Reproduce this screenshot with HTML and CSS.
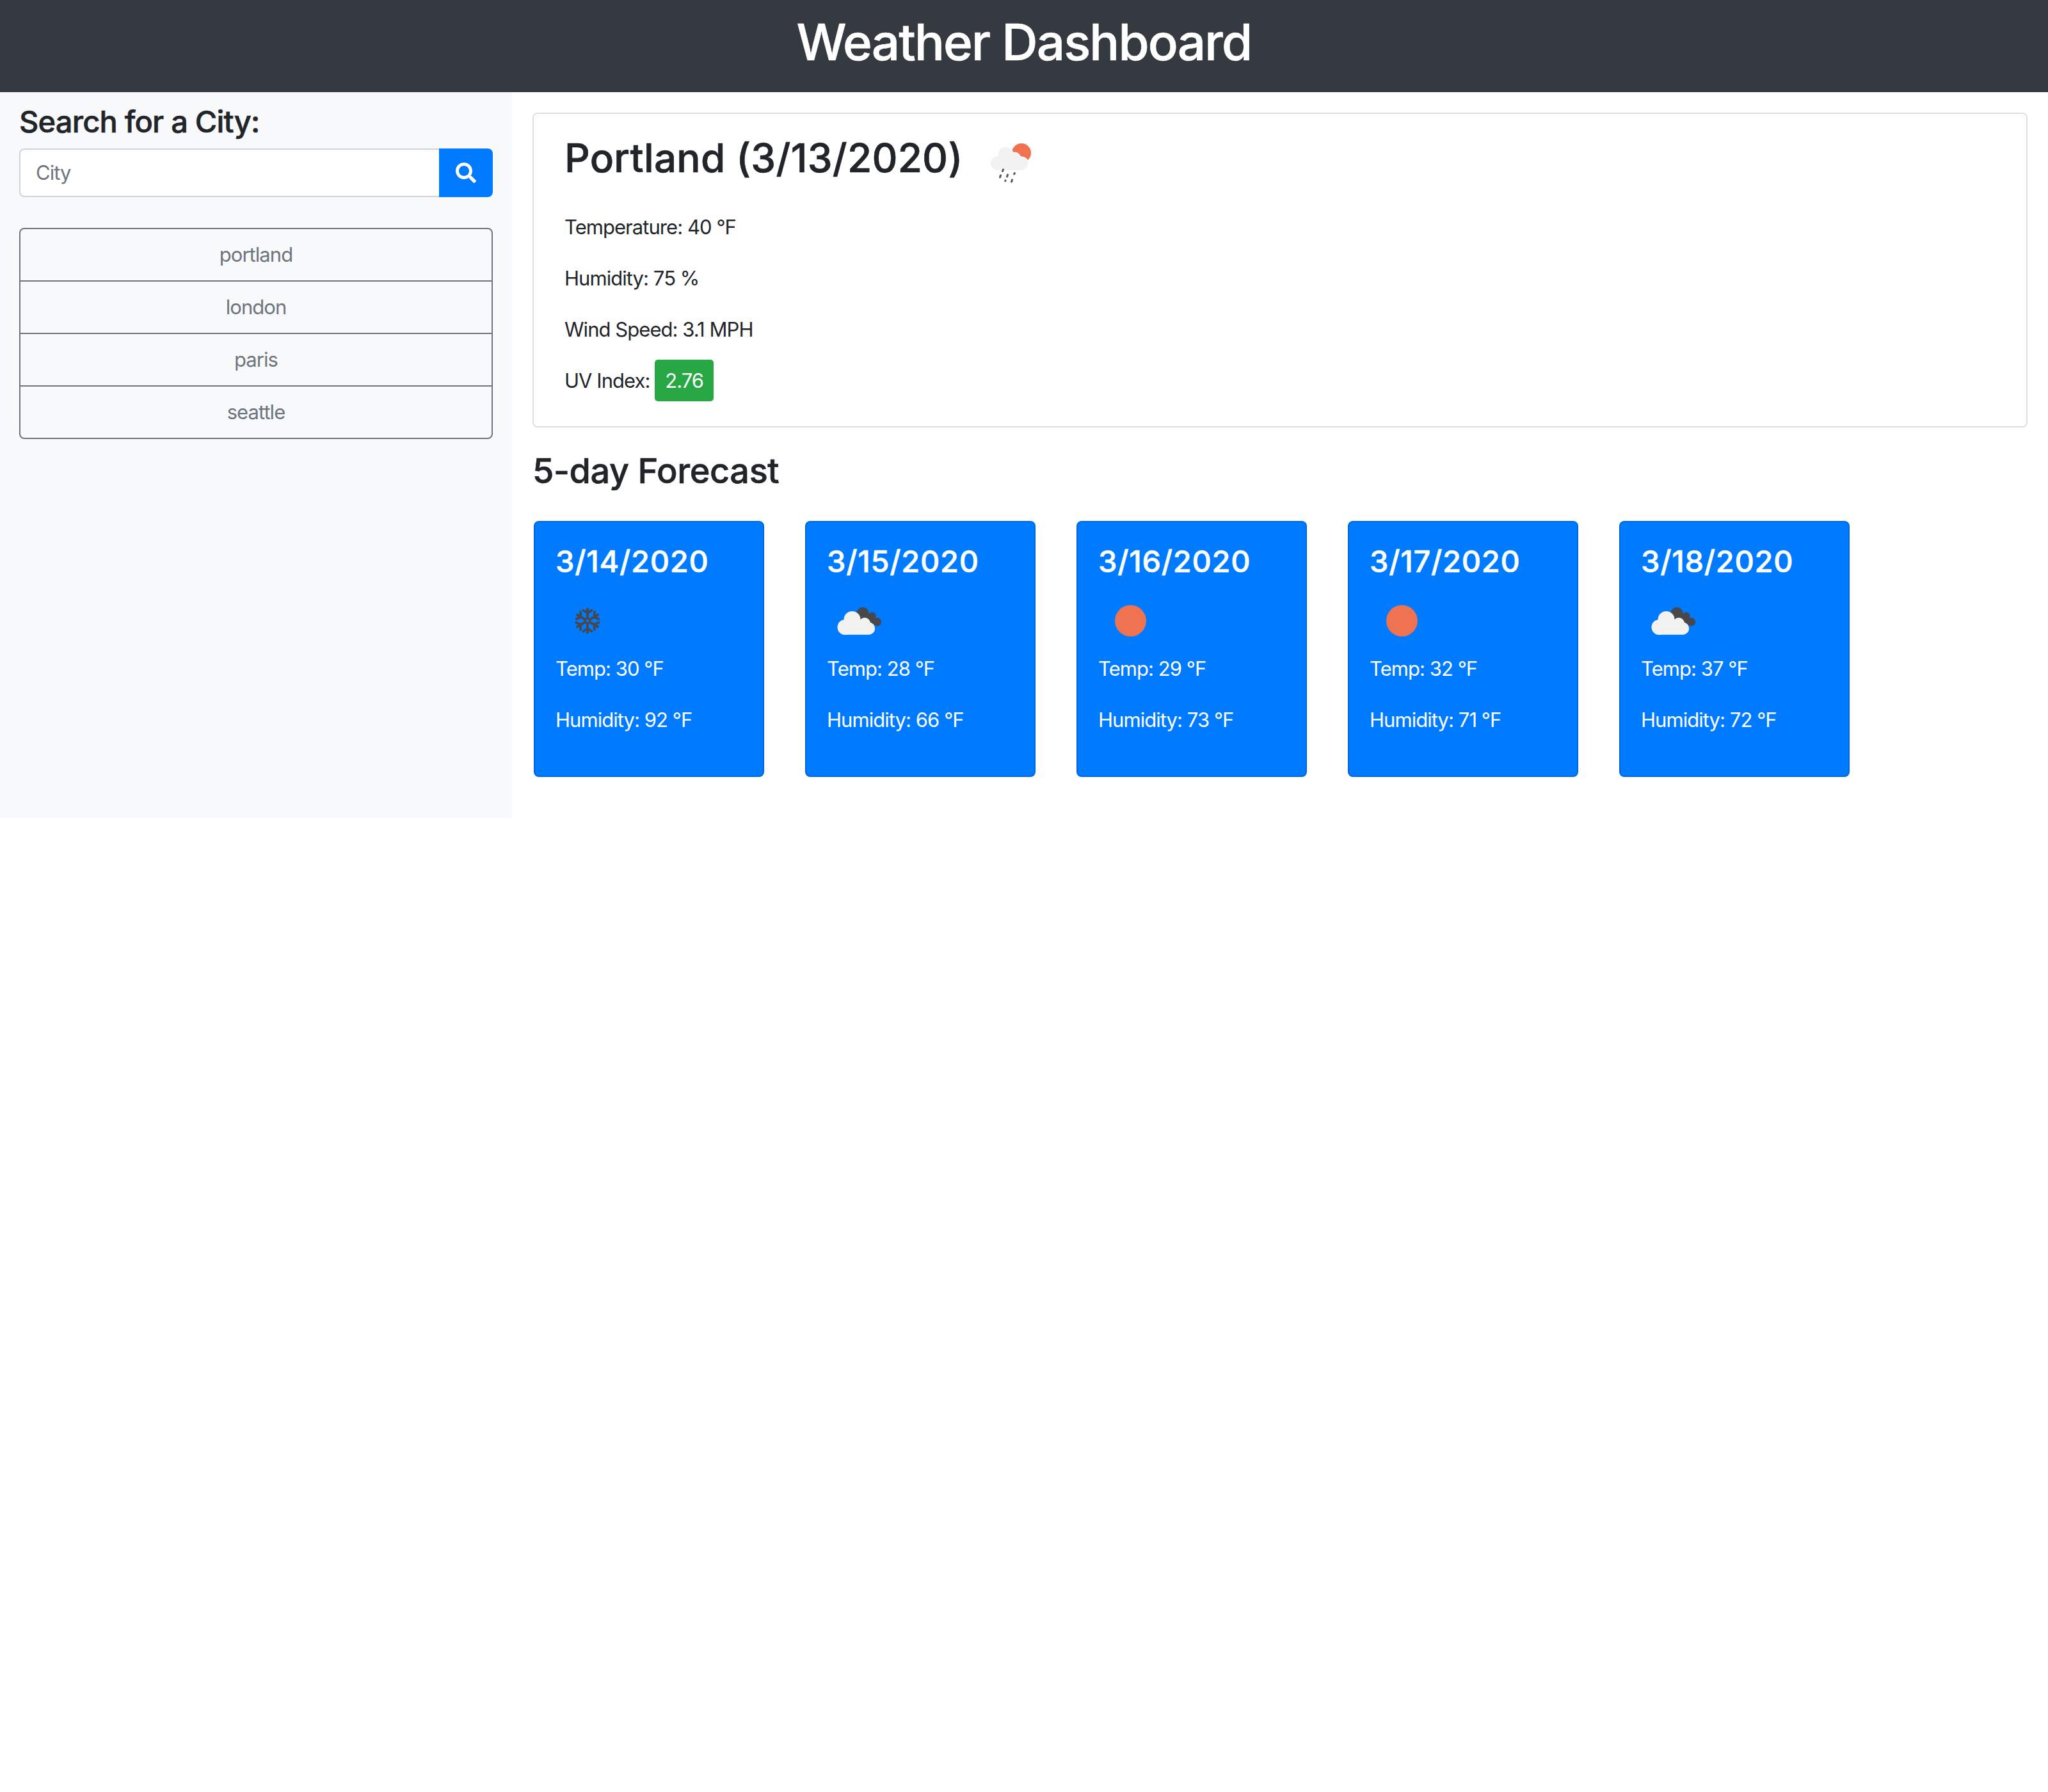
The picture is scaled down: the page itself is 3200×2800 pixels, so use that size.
FILE: index.html
```html
<!DOCTYPE html>
<html lang="en">
<head>
    <meta charset="UTF-8">
    <title>Weather Dashboard</title>
    <link rel="stylesheet" href="styles.css">
</head>
<body>
    <svg class="icon-defs" width="0" height="0">
        <symbol id="icon-clear" viewBox="0 0 100 100">
            <circle cx="51.5" cy="50" r="24.5" fill="#ef7350"/>
        </symbol>
        <symbol id="icon-snow" viewBox="0 0 100 100">
            <g fill="none" stroke="#48484c" stroke-width="3.8" stroke-linecap="round" stroke-linejoin="round" transform="translate(1 0)">
                <path d="M50 46V31.5M50 38l-6.5-4.5M50 38l6.5-4.5"/>
                <path d="M50 46V31.5M50 38l-6.5-4.5M50 38l6.5-4.5" transform="rotate(60 50 50)"/>
                <path d="M50 46V31.5M50 38l-6.5-4.5M50 38l6.5-4.5" transform="rotate(120 50 50)"/>
                <path d="M50 46V31.5M50 38l-6.5-4.5M50 38l6.5-4.5" transform="rotate(180 50 50)"/>
                <path d="M50 46V31.5M50 38l-6.5-4.5M50 38l6.5-4.5" transform="rotate(240 50 50)"/>
                <path d="M50 46V31.5M50 38l-6.5-4.5M50 38l6.5-4.5" transform="rotate(300 50 50)"/>
                <circle cx="50" cy="50" r="3.8" stroke-width="2.8"/>
            </g>
        </symbol>
        <symbol id="icon-clouds" viewBox="0 0 100 100">
            <g fill="#48484c">
                <circle cx="57" cy="38.5" r="9.7"/>
                <circle cx="71.5" cy="42.7" r="6.2"/>
                <circle cx="79.5" cy="51.7" r="6.6"/>
                <path d="M52 40H74V58H52z"/>
            </g>
            <g fill="#f2f2f0">
                <circle cx="40.5" cy="48" r="13"/>
                <circle cx="29.5" cy="60" r="12"/>
                <circle cx="60" cy="54" r="9"/>
                <circle cx="66.5" cy="62" r="9.7"/>
                <path d="M29 50H66V71.7H29z"/>
            </g>
        </symbol>
        <symbol id="icon-rain" viewBox="0 0 100 100">
            <circle cx="67" cy="38" r="15" fill="#ef7350"/>
            <g fill="#f2f2f2" stroke="#fff" stroke-width="3" paint-order="stroke">
                <circle cx="42" cy="40" r="11"/>
                <circle cx="56" cy="47" r="9"/>
                <circle cx="67" cy="55" r="10"/>
            </g>
            <g fill="#f2f2f2">
                <circle cx="42" cy="40" r="11"/>
                <circle cx="56" cy="47" r="9"/>
                <circle cx="30" cy="54" r="11"/>
                <path d="M30 43H67V65H30z"/>
            </g>
            <path d="M38.5 64l-1 2.5M34.5 73l-1 3M45.5 72l-1 3M56.3 69.5l-.6 1.5M42 81l-.3 .8M52.5 80l-1 3" fill="none" stroke="#55565a" stroke-width="3" stroke-linecap="round"/>
        </symbol>
    </svg>

    <header class="topbar">
        <h1>Weather Dashboard</h1>
    </header>

    <div class="layout">
        <!-- SEARCH -->
        <aside class="sidebar">
            <h4 class="search-title">Search for a City:</h4>
            <form class="search-form">
                <input class="search-input" type="text" placeholder="City">
                <button class="search-btn" type="button" aria-label="Search">
                    <svg viewBox="0 0 512 512" width="32" height="32"><path fill="#fff" d="M505 442.7L405.3 343c-4.5-4.5-10.6-7-17-7H372c27.6-35.3 44-79.7 44-128C416 93.1 322.9 0 208 0S0 93.1 0 208s93.1 208 208 208c48.3 0 92.7-16.4 128-44v16.3c0 6.4 2.5 12.5 7 17l99.7 99.7c9.4 9.4 24.6 9.4 33.9 0l28.3-28.3c9.4-9.4 9.4-24.6.1-34zM208 336c-70.7 0-128-57.2-128-128 0-70.7 57.2-128 128-128 70.7 0 128 57.2 128 128 0 70.7-57.2 128-128 128z"/></svg>
                </button>
            </form>
            <div class="city-list">
                <button class="city-btn" type="button">portland</button>
                <button class="city-btn" type="button">london</button>
                <button class="city-btn" type="button">paris</button>
                <button class="city-btn" type="button">seattle</button>
            </div>
        </aside>

        <main class="content">
            <!-- CURRENT WEATHER -->
            <section class="current">
                <div class="current-head">
                    <h2>Portland (3/13/2020)</h2>
                    <svg class="weather-icon"><use href="#icon-rain"/></svg>
                </div>
                <p>Temperature: 40 °F</p>
                <p>Humidity: 75 %</p>
                <p>Wind Speed: 3.1 MPH</p>
                <p>UV Index: <span class="uv-badge">2.76</span></p>
            </section>

            <!-- FORECAST -->
            <h3 class="forecast-title">5-day Forecast</h3>
            <div class="forecast">
                <div class="day-card">
                    <h4>3/14/2020</h4>
                    <svg class="weather-icon"><use href="#icon-snow"/></svg>
                    <p>Temp: 30 °F</p>
                    <p>Humidity: 92 °F</p>
                </div>
                <div class="day-card">
                    <h4>3/15/2020</h4>
                    <svg class="weather-icon"><use href="#icon-clouds"/></svg>
                    <p>Temp: 28 °F</p>
                    <p>Humidity: 66 °F</p>
                </div>
                <div class="day-card">
                    <h4>3/16/2020</h4>
                    <svg class="weather-icon"><use href="#icon-clear"/></svg>
                    <p>Temp: 29 °F</p>
                    <p>Humidity: 73 °F</p>
                </div>
                <div class="day-card">
                    <h4>3/17/2020</h4>
                    <svg class="weather-icon"><use href="#icon-clear"/></svg>
                    <p>Temp: 32 °F</p>
                    <p>Humidity: 71 °F</p>
                </div>
                <div class="day-card">
                    <h4>3/18/2020</h4>
                    <svg class="weather-icon"><use href="#icon-clouds"/></svg>
                    <p>Temp: 37 °F</p>
                    <p>Humidity: 72 °F</p>
                </div>
            </div>
        </main>
    </div>
</body>
</html>
```

FILE: styles.css
```css
*{
    box-sizing: border-box;
    margin: 0;
}
body{
    padding: 0;
    background-color: #fff;
    color: #212529;
    font-family: Inter, "Liberation Sans", sans-serif;
    font-size: 31px;
    line-height: 48px;
    letter-spacing: -0.95px;
}
h1, h2, h3, h4{
    font-weight: 500;
    line-height: 1.2;
    -webkit-text-stroke: 0.6px currentColor;
}
.icon-defs{
    position: absolute;
}
.weather-icon{
    display: block;
    width: 100px;
    height: 100px;
}
/* HEADER */
.topbar{
    background-color: #343a40;
    color: #fff;
    height: 144px;
    padding-top: 19px;
    text-align: center;
}
.topbar h1{
    font-size: 78px;
    letter-spacing: -1.85px;
}
/* LAYOUT */
.layout{
    display: flex;
}
.sidebar{
    width: 800px;
    padding: 17px 30px 0;
    background-color: #f8f9fa;
}
.search-title{
    font-size: 47px;
    letter-spacing: -0.8px;
    line-height: 58px;
    margin-bottom: 13px;
}
.search-form{
    display: flex;
    height: 76px;
    margin-bottom: 48px;
}
.search-input{
    flex: 1;
    min-width: 0;
    padding: 0 24px;
    border: 2px solid #ced4da;
    border-right: 0;
    border-radius: 8px 0 0 8px;
    font: inherit;
    letter-spacing: inherit;
    color: #495057;
    background-color: #fff;
}
.search-input::placeholder{
    color: #6c757d;
    opacity: 1;
}
.search-btn{
    display: flex;
    align-items: center;
    justify-content: center;
    width: 84px;
    padding: 0;
    border: 0;
    border-radius: 0 8px 8px 0;
    background-color: #007bff;
}
.city-list{
    display: flex;
    flex-direction: column;
}
.city-btn{
    height: 84px;
    margin-top: -2px;
    padding: 0;
    border: 2px solid #6c757d;
    background-color: transparent;
    color: #6c757d;
    font: inherit;
    letter-spacing: inherit;
}
.city-btn:first-child{
    margin-top: 0;
    border-radius: 8px 8px 0 0;
}
.city-btn:last-child{
    border-radius: 0 0 8px 8px;
}
/* MAIN */
.content{
    flex: 1;
    padding: 32px 32px 64px;
}
.current{
    height: 492px;
    padding: 32px 48px 0;
    border: 2px solid #dfdfdf;
    border-radius: 8px;
}
.current-head{
    display: flex;
    align-items: flex-start;
    gap: 24px;
    height: 105px;
    margin-bottom: 16px;
}
.current-head h2{
    font-size: 62px;
    letter-spacing: 0.25px;
    line-height: 74px;
}
.current-head .weather-icon{
    margin-top: -9px;
}
.current p{
    margin-bottom: 32px;
}
.uv-badge{
    padding: 14px 16px;
    border-radius: 5px;
    background-color: #28a745;
    color: #fff;
}
.forecast-title{
    font-size: 54px;
    letter-spacing: -0.4px;
    line-height: 67px;
    margin: 34px 0 45px;
}
.forecast{
    display: flex;
    gap: 64px;
    padding-left: 2px;
}
.day-card{
    width: 360px;
    height: 400px;
    padding: 32px;
    border: 2px solid #0069d9;
    border-radius: 8px;
    background-color: #007bff;
    color: #fff;
}
.day-card h4{
    font-size: 47px;
    letter-spacing: 0.7px;
    line-height: 58px;
    margin-bottom: 14px;
}
.day-card .weather-icon{
    margin-bottom: 1px;
    margin-left: -1px;
}
.day-card p{
    margin-bottom: 32px;
}
```
